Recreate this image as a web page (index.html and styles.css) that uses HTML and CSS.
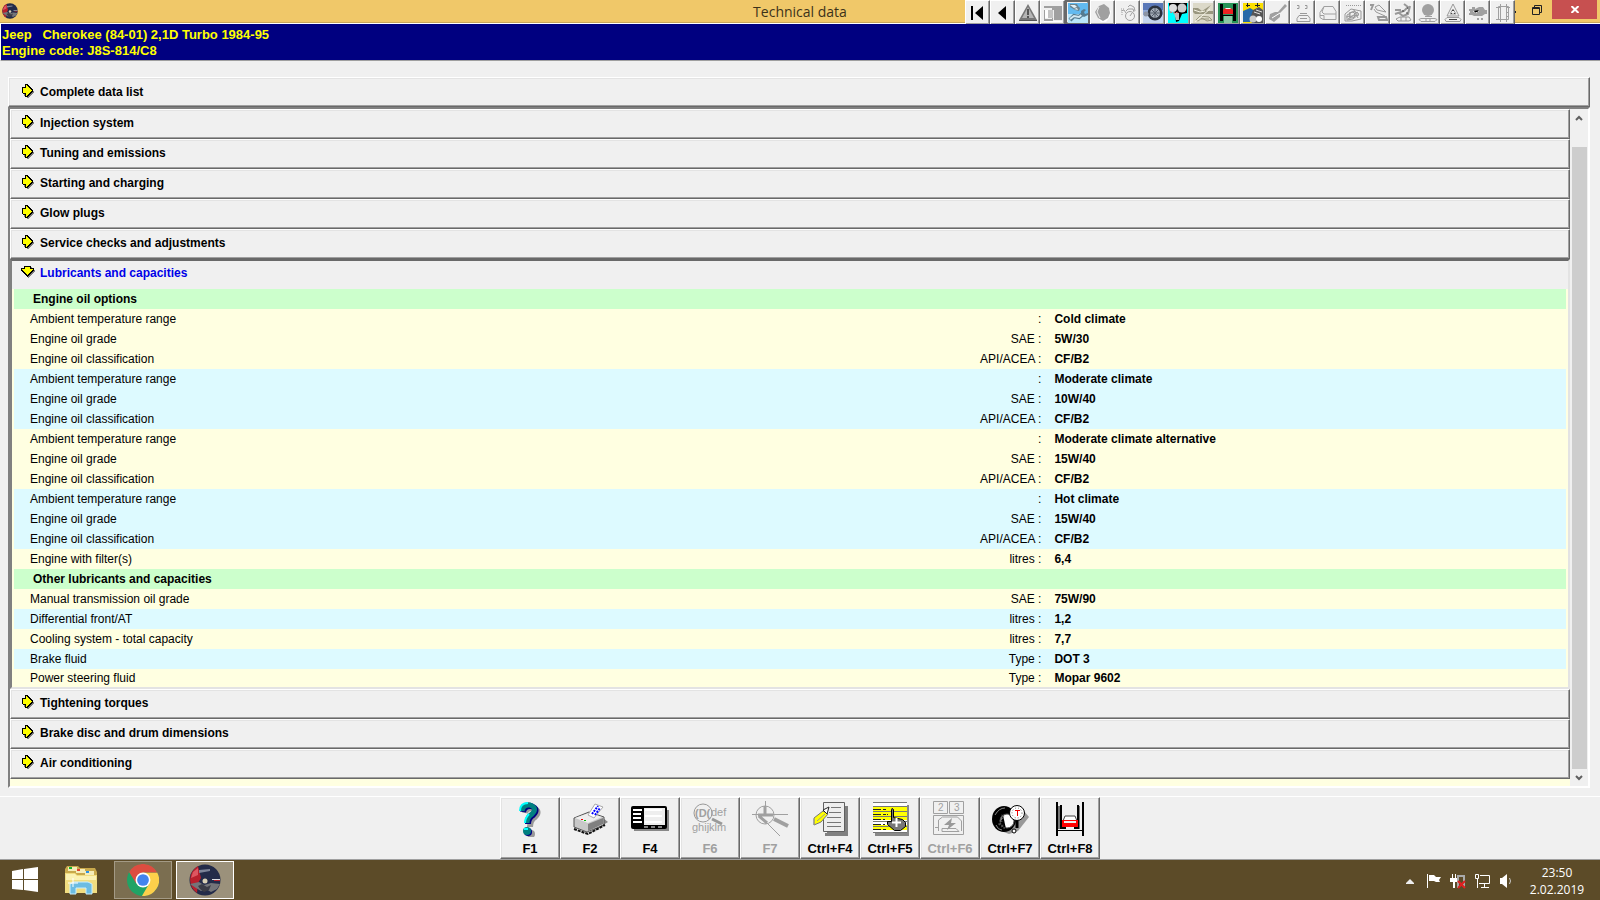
FILE: index.html
```html
<!DOCTYPE html>
<html lang="en">
<head>
    <meta charset="UTF-8">
    <meta name="viewport" content="width=device-width, initial-scale=1.0">
    <title>Technical data</title>
    <link rel="stylesheet" href="styles.css">
</head>
<body>
    <svg class="sprite" aria-hidden="true">
        <symbol id="arrow-right" viewBox="0 0 12 14">
            <path fill="#808080" d="M2 4h2V2h3v1h1v1h1v1h1v1h1v1h1v2h-1v1h-1v1h-1v1h-1v1h-1v1H5v-2H2z"/>
            <path d="M0 3h3V0h3v1h1v1h1v1h1v1h1v1h1v3h-1v1H9v1H8v1H7v1H6v1H3v-3H1v-1H0z"/>
            <path fill="#ff0" d="M1 4h3V1h1v1h1v1h1v1h1v1h1v1h1v1H9v1H8v1H7v1H6v1H5v1H4V9H1z"/>
        </symbol>
        <symbol id="arrow-down" viewBox="0 0 14 12">
            <path fill="#808080" d="M4 1h7v3h3v2h-1v1h-1v1h-1v1h-1v1H9v1H8v1H7v-1H6v-1H5V9H4V8H3V7H2V6H1V4h3z"/>
            <path d="M3 0h7v2h3v3h-1v1h-1v1h-1v1H9v1H8v1H7v1H6v-1H5V9H4V8H3V7H2V6H1V5H0V2h3z"/>
            <path fill="#ff0" d="M4 1h5v2h3v1h-1v1h-1v1H9v1H8v1H7v1H6V8H5V7H4V6H3V5H2V4H1V3h3z"/>
        </symbol>
        <symbol id="disc" viewBox="0 0 32 32">
            <circle cx="16" cy="16" r="15.500" fill="#232b49"/>
            <path fill="#b8202c" d="M9 2A16 16 0 0 0 8 29l1-10 3-5z"/>
            <path fill="#de5660" d="M4 8l5-4v7l-7 3z"/>
            <path fill="#7d8498" d="M10 6l11-1v2L10 9z"/>
            <path fill="#747579" d="M1 20l9-2 5 3 7-2 9 1-3 5-6 3-5-3-5 2-5-3z"/>
            <path fill="#3b3c46" d="M9 22l4-2 5 3 4-2-2 5-5 2-4-3z"/>
            <path fill="#dedee4" d="M23 15h8v1h-8z"/>
            <path fill="#b8202c" d="M25 16h6v1h-6z"/>
            <circle cx="16" cy="17" r="2.500" fill="#d9d0b4"/>
        </symbol>
    </svg>

    <header class="titlebar">
        <svg class="app-icon"><use href="#disc"/></svg>
        <h1 class="title">Technical data</h1>
        <div class="title-right">
            <nav class="toolbar" aria-label="Modules">
                <button class="tool" aria-label="First"><svg viewBox="0 0 20 20"><path d="M3 3h2v14H3zM15 3v14l-8-7z"/></svg></button>
                <button class="tool" aria-label="Previous"><svg viewBox="0 0 20 20"><path d="M13 3v14l-8-7z"/></svg></button>
                <button class="tool" aria-label="Warnings"><svg viewBox="0 0 20 20"><path fill="#777" d="M10 1l9 16H1z"/><path fill="#b5b5b5" d="M10 4l6 11H4z"/><path fill="#555" d="M9 6h2v6H9zM9 13h2v2H9zM1 17h18v1H1z"/></svg></button>
                <button class="tool" aria-label="Vehicle data"><svg viewBox="0 0 20 20"><path fill="#a0a0a0" d="M1 3h18v14h-8V7H9V5H1zM1 16h8V7h1v11H1zM1 7h1v10H1z"/><path fill="#fff" d="M2 7h6v8H2zM1 18h18v1H1z"/><path fill="#c4c4c4" d="M5 7h5v8H5z"/></svg></button>
                <button class="tool pressed" aria-label="Technical data" aria-pressed="true"><svg viewBox="0 0 20 20"><path fill="#62baf0" d="M0 0h20v20H0z"/><path fill="#b9e6fa" d="M0 11h20v9H0z"/><path fill="#6c8490" d="M2 1h7l1 2 2 2-1 3-4-1-5-3z"/><path fill="#e4f1f6" d="M2 2h5l2 2-3 1zM6 6l3-1 1 2z"/><path fill="none" stroke="#547b90" stroke-width="4" d="M2 17l4-4 5 1 5-4"/><path fill="none" stroke="#d1e8f2" stroke-width="2" d="M2 16l4-3 5 1 5-4"/><path fill="#547b90" d="M13 8l3-2 2 1-2 2 1 2 3-1v2l-4 2-3-2z"/></svg></button>
                <button class="tool" aria-label="Component"><svg viewBox="0 0 20 20"><path fill="#fff" d="M7 4l6-1 5 5-1 6-4 5H8l-4-6z"/><path fill="#a0a0a0" d="M6 3l5-2 5 4 1 5-2 5-5 3-5-3-3-6z"/><path stroke="#eee" fill="none" d="M6 4L4 9l3 6"/></svg></button>
                <button class="tool" aria-label="Timing"><svg viewBox="0 0 20 20"><g fill="none" stroke="#a0a0a0"><circle cx="12" cy="13" r="4.500"/><path d="M8 8l2-2h5l1 3M10 4l2-2 4 2 1 4M12 13l2-3M3 8l3-1 2 3"/><path stroke-dasharray="1 1" d="M3 6h4M4 9v3"/></g></svg></button>
                <button class="tool" aria-label="Wheels"><svg viewBox="0 0 20 20"><path fill="#5a78b8" d="M0 0h20v20H0z"/><path fill="#c5d5ed" d="M0 12h20v8H0z"/><path fill="#8fa8d6" d="M0 7h20v5H0z"/><circle cx="12" cy="10" r="7.500" fill="#2b323d"/><circle cx="12" cy="10" r="5" fill="#a4adb8"/><path stroke="#555e6a" d="M12 5v10M7 10h10M8 6l8 8M16 6l-8 8"/><circle cx="3" cy="11" r="2.500" fill="#8b94a4"/></svg></button>
                <button class="tool" aria-label="Timing belts"><svg viewBox="0 0 20 20"><path fill="#0ff" d="M0 0h20v20H0z"/><path d="M1 0h18v10l-5 1-3 7-3 1-1-9-6-4z"/><circle cx="5" cy="5" r="4" fill="#ddd"/><circle cx="14" cy="5" r="4.500" fill="#ccc"/><path fill="#bbb" d="M6 10h5v7H8z"/><path fill="none" stroke="#e66" stroke-dasharray="2 1" d="M2 9l4 1 5-1"/></svg></button>
                <button class="tool" aria-label="Bodywork"><svg viewBox="0 0 20 20"><path fill="#dcd9c9" d="M0 0h20v20H0z"/><path fill="#9a9780" d="M0 5h5l4 3 9-6-5 6h7v3H2L0 9z"/><path fill="none" stroke="#9a9780" d="M3 17l4-4 9 1 3 3-5 1-5-3-4 3zM8 16h8"/><path fill="none" stroke="#f5f3e5" d="M1 7l6 2 5-1M2 19L17 6"/></svg></button>
                <button class="tool" aria-label="Lifting points"><svg viewBox="0 0 20 20"><path fill="#289458" d="M0 0h20v20H0z"/><path fill="#8cc8a4" d="M6 12h8v8H6z"/><path d="M2 1h3v17H2zM15 1h3v17h-3zM4 12h12v1H4z"/><path fill="#e22" d="M5 7l2-2h6l2 2v4H5z"/><path fill="#fff" d="M8 5h4l1 1H7z"/></svg></button>
                <button class="tool" aria-label="Service"><svg viewBox="0 0 20 20"><path fill="#fce000" d="M0 0h20v20H0z"/><path fill="#2769a8" d="M0 8l7-3 5 3 2 5-7 6H0z"/><path fill="#222" d="M4 0h1v4H4zM3 2h4v1H3zM14 0h1v4h-1zM12 2h5v1h-5z"/><path fill="#555" d="M10 7l6-3 4 3v13H9l-2-4z"/><circle cx="10" cy="16" r="3.500" fill="#ccc"/><circle cx="16" cy="16" r="3" fill="#fff"/><path stroke="#ddd" d="M11 9l6 2M13 7l6 2"/></svg></button>
                <button class="tool" aria-label="Glow plugs"><svg viewBox="0 0 20 20"><path fill="#a0a0a0" d="M17 1l2 2-7 7v4l-6 5-5-3 1-5 5-2h3z"/><path stroke="#fff" d="M4 15l8-5"/></svg></button>
                <button class="tool" aria-label="Electrical"><svg viewBox="0 0 20 20"><g fill="none" stroke="#999"><path d="M4 2.500h2v3H4M12 2.500h2v3h-2M7 10.500h7M6 12.500h9l2 3v3H4v-3zM7 15.500h7"/></g></svg></button>
                <button class="tool" aria-label="Vehicle"><svg viewBox="0 0 20 20"><g fill="none" stroke="#a0a0a0"><path d="M6 3.500h9l3 5v8H5l-3-2v-5zM6 3.500L4 9l2 2h12M2 12.500h4v4"/></g></svg></button>
                <button class="tool" aria-label="Engine bay"><svg viewBox="0 0 20 20"><g fill="none" stroke="#999"><path stroke-dasharray="1 1" d="M3 2.500h15"/><path d="M2 11l6-5 10 2v8l-9 2H2zM4 12l7-4 5 3-6 5-6 1zM7 9v8M11 7l4 8M5 16l10-7M3 14l13-2"/><circle cx="9" cy="12" r="3"/></g></svg></button>
                <button class="tool" aria-label="Troubleshooting"><svg viewBox="0 0 20 20"><g fill="none" stroke="#999"><path stroke-width="2" d="M2 2h3L3 7"/><path d="M7 4l4-2 7 7-9-2zM8 9l9 4M6 6l2 3"/><path stroke-width="2" d="M10 14h8l1 3h-8z"/></g></svg></button>
                <button class="tool" aria-label="Wiring"><svg viewBox="0 0 20 20"><g fill="none" stroke="#999" stroke-width="2"><path d="M11 1l4 3-4 4-9 3M17 3l-2 8-5 2-4-3M2 7h6"/></g><path fill="none" stroke="#999" d="M3 16l4-2h9l2 3-2 1H5zM8 14v4M13 14v4"/><path stroke="#444" d="M9 8h2M13 10h2M14 5h1"/></svg></button>
                <button class="tool" aria-label="Airbags"><svg viewBox="0 0 20 20"><circle cx="10" cy="7" r="6" fill="#a0a0a0"/><path fill="none" stroke="#a0a0a0" d="M7 13.500h7M3 15.500h14l2 1-2 2H3l-2-2zM8 16v2M12 16v2"/></svg></button>
                <button class="tool" aria-label="ABS"><svg viewBox="0 0 20 20"><path fill="none" stroke="#999" d="M10 1l6 12H4zM10 6l3 5H7zM4 14.500h12l2 2-1 2H3l-1-2z"/><path fill="#444" d="M9 7h2v1H9zM8 10h1v1H8zM11 10h1v1h-1zM6 16h8v1H6z"/></svg></button>
                <button class="tool" aria-label="Engine management"><svg viewBox="0 0 20 20"><path fill="#a0a0a0" d="M1 6h3V4h3v2l4-2h4l2 3h2v4h-2l-3 2H6l-2-1H1v-2h1V8H1zM9 15h2v2H9zM13 15h2v2h-2z"/><path stroke="#eee" stroke-dasharray="2 1" d="M5 8l3 2 4-3"/></svg></button>
                <button class="tool" aria-label="Documents"><svg viewBox="0 0 20 20"><g fill="none" stroke="#a0a0a0"><path d="M5.500 3.500h10v13h-10zM7.500 1v18M13.500 1v18M3 4.500h5M3 16.500h5M13 4.500h4M13 9.500h3M13 13.500h3"/></g></svg></button>
            </nav>
            <button class="win-btn minimize" aria-label="Minimize"></button>
            <button class="win-btn restore" aria-label="Restore"><svg viewBox="0 0 10 10"><path fill="none" stroke="#222" d="M2.500 2V.5h7v7H8"/><path fill="none" stroke="#222" stroke-width="1" d="M.5 2.500h7v7h-7zM0 3.500h8"/></svg></button>
            <button class="win-btn close" aria-label="Close"><svg viewBox="0 0 8 7"><path fill="none" stroke="#fff" stroke-width="2" d="M.5 0l7 7M7.500 0l-7 7"/></svg></button>
        </div>
    </header>

    <section class="vehicle">
        <p class="vehicle-name">Jeep   Cherokee (84-01) 2,1D Turbo 1984-95</p>
        <p>Engine code: J8S-814/C8</p>
    </section>

    <main class="content">
        <button class="row row-all"><svg class="arrow"><use href="#arrow-right"/></svg>Complete data list</button>
        <div class="list-frame">
            <div class="list">
                <button class="row"><svg class="arrow"><use href="#arrow-right"/></svg>Injection system</button>
                <button class="row"><svg class="arrow"><use href="#arrow-right"/></svg>Tuning and emissions</button>
                <button class="row"><svg class="arrow"><use href="#arrow-right"/></svg>Starting and charging</button>
                <button class="row"><svg class="arrow"><use href="#arrow-right"/></svg>Glow plugs</button>
                <button class="row"><svg class="arrow"><use href="#arrow-right"/></svg>Service checks and adjustments</button>
                <section class="group">
                    <button class="row open" aria-expanded="true"><svg class="arrow arrow-down"><use href="#arrow-down"/></svg>Lubricants and capacities</button>
                    <table class="data">
                        <colgroup>
                            <col class="col-name">
                            <col class="col-unit">
                            <col>
                        </colgroup>
                        <tbody>
                            <tr class="green"><th colspan="3">Engine oil options</th></tr>
                            <tr><td>Ambient temperature range</td><td>:</td><td>Cold climate</td></tr>
                            <tr><td>Engine oil grade</td><td>SAE :</td><td>5W/30</td></tr>
                            <tr><td>Engine oil classification</td><td>API/ACEA :</td><td>CF/B2</td></tr>
                            <tr class="blue"><td>Ambient temperature range</td><td>:</td><td>Moderate climate</td></tr>
                            <tr class="blue"><td>Engine oil grade</td><td>SAE :</td><td>10W/40</td></tr>
                            <tr class="blue"><td>Engine oil classification</td><td>API/ACEA :</td><td>CF/B2</td></tr>
                            <tr><td>Ambient temperature range</td><td>:</td><td>Moderate climate alternative</td></tr>
                            <tr><td>Engine oil grade</td><td>SAE :</td><td>15W/40</td></tr>
                            <tr><td>Engine oil classification</td><td>API/ACEA :</td><td>CF/B2</td></tr>
                            <tr class="blue"><td>Ambient temperature range</td><td>:</td><td>Hot climate</td></tr>
                            <tr class="blue"><td>Engine oil grade</td><td>SAE :</td><td>15W/40</td></tr>
                            <tr class="blue"><td>Engine oil classification</td><td>API/ACEA :</td><td>CF/B2</td></tr>
                            <tr><td>Engine with filter(s)</td><td>litres :</td><td>6,4</td></tr>
                            <tr class="green"><th colspan="3">Other lubricants and capacities</th></tr>
                            <tr><td>Manual transmission oil grade</td><td>SAE :</td><td>75W/90</td></tr>
                            <tr class="blue"><td>Differential front/AT</td><td>litres :</td><td>1,2</td></tr>
                            <tr><td>Cooling system - total capacity</td><td>litres :</td><td>7,7</td></tr>
                            <tr class="blue"><td>Brake fluid</td><td>Type :</td><td>DOT 3</td></tr>
                            <tr><td>Power steering fluid</td><td>Type :</td><td>Mopar 9602</td></tr>
                        </tbody>
                    </table>
                </section>
                <button class="row"><svg class="arrow"><use href="#arrow-right"/></svg>Tightening torques</button>
                <button class="row"><svg class="arrow"><use href="#arrow-right"/></svg>Brake disc and drum dimensions</button>
                <button class="row"><svg class="arrow"><use href="#arrow-right"/></svg>Air conditioning</button>
            </div>
            <div class="scrollbar">
                <button class="scroll-btn" aria-label="Scroll up"><svg viewBox="0 0 8 6"><path fill="none" stroke="#606060" stroke-width="2" d="M1 5l3-3 3 3"/></svg></button>
                <div class="track"><div class="thumb"></div></div>
                <button class="scroll-btn" aria-label="Scroll down"><svg viewBox="0 0 8 6"><path fill="none" stroke="#606060" stroke-width="2" d="M1 1l3 3 3-3"/></svg></button>
            </div>
        </div>
    </main>

    <footer class="keys">
        <button class="key">
            <svg viewBox="0 0 38 36"><path fill="none" stroke="#999" stroke-width="6" d="M14 12q1-6 8-5 8 3 2 9-5 3-5 10"/><circle cx="20" cy="33" r="4" fill="#999"/><path fill="none" stroke="#000080" stroke-width="6" d="M12 11q1-7 8-6 8 3 2 9-5 3-5 9"/><path fill="none" stroke="#008080" stroke-width="5" d="M11 10q1-7 8-6 8 3 2 9-5 3-5 9"/><path fill="none" stroke="#0ff" stroke-width="2" d="M9 10q0-8 8-8M14 22q0-5 4-9"/><circle cx="17" cy="31" r="4" fill="#000080"/><circle cx="16" cy="30" r="4" fill="#008080"/><path stroke="#0ff" stroke-width="2" d="M13 28h4"/></svg>
            F1
        </button>
        <button class="key">
            <svg viewBox="0 0 38 36"><path fill="#888" d="M16 34l21-13-5-4v5z"/><path fill="#c8c8c8" stroke="#555" d="M3 17l15-6 15 5v8l-17 7L3 26z"/><path fill="#eee" d="M4 17l14-5 13 4-14 6z"/><path fill="#808080" d="M17 23l15-6v6l-15 7z"/><path stroke="#111" stroke-width="2" stroke-dasharray="3 1" fill="none" d="M3 28l14 5 17-9"/><path fill="#fff" stroke="#aaa" d="M17 14l7-11 8 3-9 11z"/><path stroke="#00f" stroke-width="2" stroke-dasharray="2 1" d="M21 13l6-8M24 14l5-7"/><path fill="#e00" d="M10 18h2v1h-2z"/><path fill="#0b0" d="M13 19h2v1h-2z"/></svg>
            F2
        </button>
        <button class="key">
            <svg viewBox="0 0 38 36"><path fill="#888" d="M3 9h35v21H3z"/><rect y="5" width="36" height="23" rx="2"/><path fill="#eee" d="M13 7h21v17H13z"/><path stroke="#fff" stroke-width="2" d="M2 9h9M2 13h8M2 17h8M2 21h9M14 9h17M14 15h17M14 21h17"/><path stroke="#fff" d="M13 26h4M20 26h4M27 26h4"/></svg>
            F4
        </button>
        <button class="key" disabled>
            <svg viewBox="0 0 38 36"><text class="icon-text bold" x="4" y="16">(D(</text><text class="icon-text" x="20" y="15">def</text><text class="icon-text" x="1" y="30">ghijklm</text><circle cx="12" cy="12" r="9" fill="none" stroke="#999"/><path stroke="#999" stroke-width="3" d="M21 18l10 5"/></svg>
            F6
        </button>
        <button class="key" disabled>
            <svg viewBox="0 0 38 36"><g fill="none" stroke="#a0a0a0"><circle cx="14" cy="14" r="9"/><path d="M14.500 0v14M1 13.500h36M14 20l15 15"/><path stroke-width="3" d="M14 5v9M7 14h15M8 15l8 7"/><path stroke-width="4" d="M23 18l14 7"/></g></svg>
            F7
        </button>
        <button class="key">
            <svg viewBox="0 0 38 36"><path fill="#808080" d="M16 5h21v30H14v-3h2z"/><path fill="#eee" stroke="#606060" d="M12.500 1.500h21v29h-21z"/><path stroke="#777" d="M20 6.500h10M18 11.500h12M16 16.500h14M16 21.500h14M16 25.500h14"/><path fill="#ff0" stroke="#777" d="M3 17l9-7 5 3-7 8-7 3z"/><path fill="#fff" stroke="#222" d="M12 9l6-3-2 7z"/><path stroke="#999" d="M6 20l8-7M3 24v-6"/></svg>
            Ctrl+F4
        </button>
        <button class="key">
            <svg viewBox="0 0 38 36"><path fill="#888" d="M4 4h34v31H4z"/><path fill="#ff0" d="M2 1h34v31H2z"/><path fill="#fff" d="M2 19h34v5H2zM2 2h34v3H2zM2 29h34v3H2z"/><path stroke="#777" d="M2 1.500h34M2 5.500h34M2 10.500h34M2 15.500h34M2 20.500h34M2 25.500h34M2 31.500h34"/><path stroke="#222" stroke-dasharray="8 2 3 1" d="M2 8.500h14M2 13.500h15M2 18.500h12M2 23.500h12M2 28.500h14"/><path fill="#777" stroke="#000" d="M20.500 8.500q0-2 2 0v8l9 2 3 3v4l-5 4h-6l-7-6v-3h4z"/><path stroke="#fff" stroke-width="2" d="M21 21.500h9M25.500 17v9"/></svg>
            Ctrl+F5
        </button>
        <button class="key" disabled>
            <svg viewBox="0 0 38 36"><g fill="none" stroke="#a0a0a0"><path d="M2.500.5h14v12h-14zM18.500.5h14v12h-14zM2.500 14.500h30v19h-30zM7.500 30v-11l4-3h15l4 4v10M4 26.500h4M11 27.500h14l3 3h-17z"/></g><text class="icon-text small" x="7" y="10">2</text><text class="icon-text small" x="23" y="10">3</text><path fill="#999" d="M21 17l-8 7h5l-2 5 9-7h-5z"/></svg>
            Ctrl+F6
        </button>
        <button class="key">
            <svg viewBox="0 0 38 36"><path fill="#999" d="M10 30l8 3 9-3 11-14-6-7z"/><ellipse cx="13" cy="18" rx="12" ry="13"/><path fill="none" stroke="#888" d="M4 14q4-7 10-7M5 24q2 5 6 5"/><circle cx="16" cy="20" r="7" fill="#fff" stroke="#555"/><path stroke="#555" stroke-dasharray="1 2" stroke-width="3" d="M12 14l-3 9 6 5"/><path fill="none" stroke="#000" stroke-width="3" d="M26 18v9"/><circle cx="23" cy="30" r="2" fill="#fff" stroke="#000"/><circle cx="26" cy="12" r="7.500" fill="#fff" stroke="#000"/><circle cx="26" cy="12" r="5" fill="none" stroke="#777" stroke-dasharray="1 2"/><path stroke="#e00" d="M26.500 9v6M24 9.500h5"/></svg>
            Ctrl+F7
        </button>
        <button class="key">
            <svg viewBox="0 0 38 36"><path stroke="#777" stroke-width="2" d="M8 5v23M28 5v23"/><path d="M5 1h2v34H5zM31 1h2v34h-2zM9 4h2v24H9zM26 4h2v24h-2zM5 29h28v1H5z"/><path fill="#fff" stroke="#444" d="M14 15h10l2 5H12z"/><path fill="#f00" d="M11 19h16v7H11z"/><path fill="#eee" d="M13 20h12v2H13z"/><path d="M11 26h4v2h-4zM23 26h4v2h-4z"/></svg>
            Ctrl+F8
        </button>
    </footer>

    <div class="taskbar">
        <button class="task start" aria-label="Start"><svg viewBox="0 0 26 26"><path fill="#fff" d="M0 4l11-2v10H0zM12 2l14-2v12H12zM0 13h11v10L0 22zM12 13h14v12l-14-2z"/></svg></button>
        <button class="task" aria-label="File Explorer"><svg viewBox="0 0 32 30"><path fill="#c9a94c" d="M0 4l2-3h11l2 2h15l2 4v21H0z"/><path fill="#f5edb9" d="M3 2h9v4H3zM11 4h9v4h-9zM20 6h9v4h-9z"/><path fill="#17b52d" d="M4 2h3v2H4z"/><path fill="#e04430" d="M12 4h3v2h-3z"/><path fill="#2a91e8" d="M21 6h3v2h-3z"/><path fill="#f1dd80" d="M0 8h10l2 2h20v18H0z"/><path fill="#fbf2b4" d="M1 9h9l2 2h19v4H1z"/><path fill="#6cbce2" stroke="#c9efff" d="M5 29V19l4-2h14l4 2v10h-6v-6H11v6z"/><path stroke="#fff" d="M8 13v9M3 18h10"/></svg></button>
        <button class="task running" aria-label="Chrome"><svg viewBox="0 0 30 30"><circle cx="15" cy="15" r="15" fill="#20a365"/><path fill="#fdd04b" d="M15 8h13.300A15 15 0 0 1 14 30l7-12z"/><path fill="#dd4d40" d="M2 7.500A15 15 0 0 1 28.300 8H15l-6.500 10z"/><circle cx="15" cy="15" r="7" fill="#fff"/><circle cx="15" cy="15" r="5.500" fill="#4384ee"/></svg></button>
        <button class="task running active" aria-label="Technical data"><svg viewBox="0 0 32 32"><use href="#disc"/></svg></button>
        <div class="tray">
            <svg class="up" viewBox="0 0 8 5"><path fill="#eee" d="M0 4l4-4 4 4v1H0z"/></svg>
            <svg viewBox="0 0 16 16"><path fill="#fff" d="M1 1h1v14H1zM3 2h5l2 2h5l-2 3 1 2h-4L8 8H3z"/></svg>
            <svg viewBox="0 0 16 16"><path fill="none" stroke="#aaa" stroke-width="2" d="M8 15V3h6v11"/><path fill="#fff" d="M2 1h1v4H2zM5 1h1v4H5zM0 5h7v4H5v6H3V9H0z"/><path stroke="#e02020" stroke-width="2" d="M8 8l7 7M15 8l-7 7"/></svg>
            <svg viewBox="0 0 16 16"><path fill="none" stroke="#fff" d="M6 2.500h9.500v8H5M10.500 11v3M7 14.500h8M1.500 1.500h3v4h-3zM3.500 6v9"/></svg>
            <svg viewBox="0 0 16 16"><path fill="#fff" d="M2 5h2l5-4v14l-5-4H2z"/><path fill="none" stroke="#ccc" d="M11.500 5q2 3 0 6"/></svg>
        </div>
        <div class="clock"><time>23:50</time><time>2.02.2019</time></div>
    </div>
</body>
</html>
```
FILE: styles.css
```css
* {
    margin: 0;
    padding: 0;
    box-sizing: border-box;
}

body {
    display: flex;
    flex-direction: column;
    min-height: 100vh;
    background: #f0f0f0;
    color: #000;
    font-family: "Liberation Sans", Arial, sans-serif;
    font-size: 12px;
}

button {
    font: inherit;
    color: inherit;
    border: none;
    background: none;
}

svg {
    display: block;
    flex: none;
}

.sprite {
    display: none;
}

/* title bar */
.titlebar {
    display: grid;
    grid-template-columns: 1fr auto 1fr;
    height: 24px;
    background: #f0c869;
    border-bottom: 1px solid #fff;
    box-shadow: inset 0 -1px #c9a75a;
}

.app-icon {
    width: 16px;
    height: 16px;
    margin: 3px 2px;
}

.title {
    font-family: "Open Sans", "Noto Sans", sans-serif;
    font-size: 14px;
    font-weight: 400;
    line-height: 23px;
    color: #3c321a;
}

.title-right {
    display: flex;
    justify-content: flex-end;
    align-items: flex-start;
    padding-right: 3px;
}

.toolbar {
    display: flex;
}

.tool {
    width: 25px;
    height: 25px;
    padding: 2px;
    background: #f0f0f0;
    border: 1px solid;
    border-color: #fff #696969 #696969 #fff;
    box-shadow: inset -1px -1px #a0a0a0;
}

.tool svg {
    width: 20px;
    height: 20px;
}

.tool.pressed {
    border: 2px solid #696969;
    padding: 1px;
}

.win-btn {
    display: flex;
    align-items: center;
    justify-content: center;
    height: 19px;
}

/* mostly hidden behind the toolbar */
.minimize {
    width: 1px;
    height: 2px;
    margin: 11px 10px 0 0;
    background: #222;
}

.restore {
    width: 22px;
    margin-right: 4px;
}

.restore svg {
    width: 10px;
    height: 10px;
}

.close {
    width: 45px;
    background: #c75050;
}

.close svg {
    width: 8px;
    height: 7px;
}

/* vehicle header */
.vehicle {
    padding: 3px 1px 1px;
    height: 37px;
    background: #000080;
    border-bottom: 1px solid #a0a0a0;
    border-left: 1px solid #fff;
    color: #ff0;
    font-size: 13px;
    font-weight: bold;
    line-height: 16px;
}

.vehicle-name {
    white-space: pre;
}

/* section list */
.content {
    flex: 1;
    display: flex;
    flex-direction: column;
    padding: 16px 10px 8px 8px;
}

.row {
    display: flex;
    align-items: center;
    gap: 6px;
    width: 100%;
    height: 30px;
    padding: 0 11px 2px;
    background: #f0f0f0;
    border: 1px solid;
    border-color: #fff #696969 #696969 #fff;
    box-shadow: inset -1px -1px #a0a0a0, inset 1px 1px #e3e3e3;
    font-weight: bold;
    text-align: left;
}

.row-all {
    padding: 0 13px;
}

.arrow {
    width: 12px;
    height: 14px;
    margin-bottom: 2px;
}

.arrow-down {
    width: 14px;
    height: 12px;
}

.list-frame {
    flex: 1;
    display: flex;
    border: 2px solid;
    border-color: #808080 #fff #fff #808080;
    background: #ffffe1;
}

.list {
    flex: 1;
}

.group {
    border: 2px solid;
    border-color: #696969 #e3e3e3 #e3e3e3 #808080;
}

.row.open {
    height: 28px;
    padding: 0 9px 4px;
    gap: 5px;
    border: none;
    box-shadow: none;
    color: #0000e8;
}

.data {
    width: 100%;
    table-layout: fixed;
    border-collapse: separate;
    border-spacing: 0;
    border: solid #ffffe1;
    border-width: 0 2px;
    background: #ffffe1;
}

.col-name {
    width: 50%;
}

.col-unit {
    width: 16.2%;
}

.data tr {
    height: 20px;
}

.data tr:last-child {
    height: 18px;
}

.data th {
    padding-left: 19px;
    text-align: left;
}

.data td:first-child {
    padding-left: 16px;
}

.data td:nth-child(2) {
    text-align: right;
}

.data td:last-child {
    padding-left: 13px;
    font-weight: bold;
}

.green {
    background: #ccffcc;
}

.blue {
    background: #ddfaff;
}

.scrollbar {
    display: flex;
    flex-direction: column;
    width: 18px;
    background: #f0f0f0;
}

.scroll-btn {
    display: flex;
    align-items: center;
    justify-content: center;
    height: 17px;
}

.scroll-btn svg {
    width: 8px;
    height: 6px;
}

.track {
    flex: 1;
    padding-top: 21px;
}

.thumb {
    width: 15px;
    height: 100%;
    margin: 0 1px 0 2px;
    background: #cdcdcd;
}

/* function keys */
.keys {
    display: flex;
    justify-content: center;
    height: 64px;
    border-top: 1px solid #fff;
    border-bottom: 1px solid #a0a0a0;
}

.key {
    display: flex;
    flex-direction: column;
    align-items: center;
    justify-content: space-between;
    width: 60px;
    padding: 3px 0 2px;
    border: 1px solid;
    border-color: #fff #696969 #696969 #fff;
    box-shadow: inset -1px -1px #a0a0a0, inset 1px 1px #e3e3e3;
    font-size: 13px;
    font-weight: bold;
}

.key svg {
    width: 38px;
    height: 36px;
}

.key:disabled {
    color: #a0a0a0;
}

.icon-text {
    fill: #a0a0a0;
    font-size: 11px;
    font-weight: 400;
}

.icon-text.bold {
    font-weight: bold;
}

.icon-text.small {
    font-size: 10px;
}

/* taskbar */
.taskbar {
    display: flex;
    height: 40px;
    background: #5c4b28;
    color: #fff;
}

.task {
    display: flex;
    align-items: center;
    justify-content: center;
    width: 58px;
    margin: 1px 2px 1px;
}

.task svg {
    width: 32px;
    height: 32px;
}

.task.start {
    width: 50px;
    margin: 0;
}

.task.start svg {
    width: 26px;
    height: 26px;
}

.running {
    background: #7b6e50;
    border: 1px solid #a39a85;
}

.active {
    background: #9b917b;
    border-color: #fff;
}

.tray {
    display: flex;
    align-items: center;
    gap: 8px;
    margin-left: auto;
    padding-top: 2px;
}

.tray svg {
    width: 16px;
    height: 16px;
}

.tray .up {
    width: 8px;
    height: 5px;
    margin-right: 4px;
}

.clock {
    display: flex;
    flex-direction: column;
    justify-content: center;
    width: 86px;
    padding-top: 2px;
    font-family: "Open Sans", "Noto Sans", sans-serif;
    line-height: 17px;
    text-align: center;
}
```
